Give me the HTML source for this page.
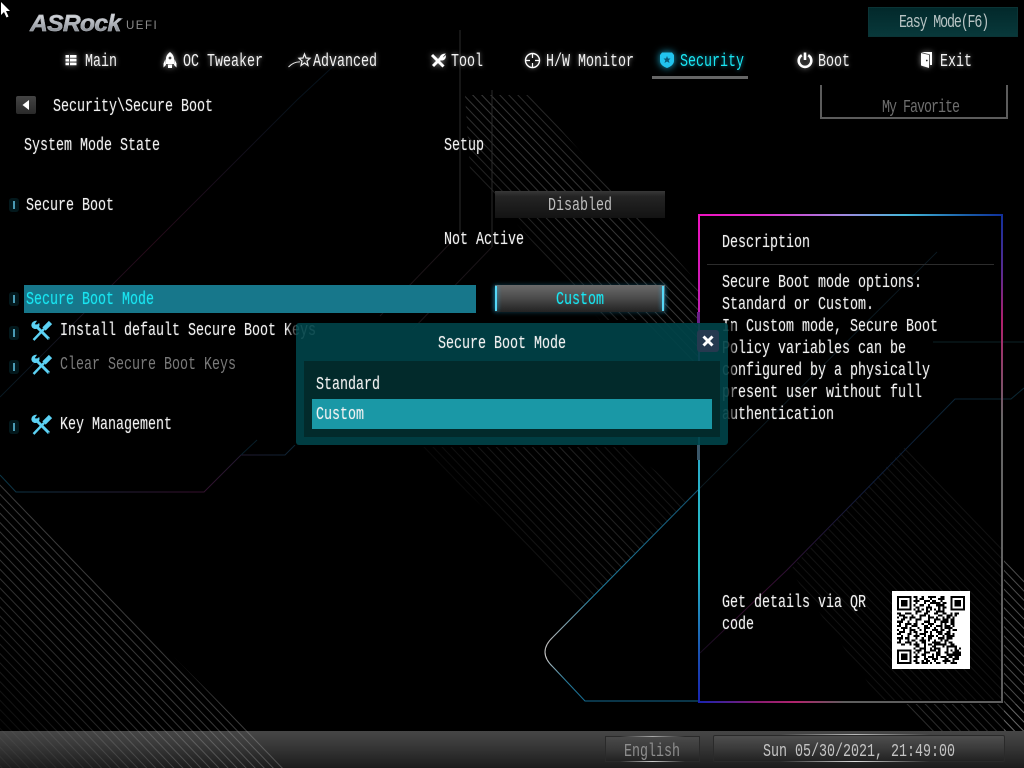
<!DOCTYPE html>
<html><head><meta charset="utf-8"><title>UEFI</title>
<style>
html,body{margin:0;padding:0;background:#000;width:1024px;height:768px;overflow:hidden}
#p{position:relative;width:1024px;height:768px;overflow:hidden;background:#000}
.a{position:absolute}
.t{position:absolute;white-space:pre;font:14px/20px "Liberation Mono",monospace;margin-top:2px;color:#f2f2f2;text-shadow:0 0 1px rgba(255,255,255,.3);transform:scale(.952,1.3);transform-origin:0 50%}
.n{text-shadow:0 0 4px rgba(255,255,255,.55)}
.c{color:#19e6f2;text-shadow:0 0 1px rgba(25,230,242,.4)}
svg{position:absolute;overflow:visible}
.ind{position:absolute;left:9px;width:10px;height:14px;background:#03181c;border-radius:3px}
.ind:after{content:"";position:absolute;left:4px;top:3px;width:2px;height:8px;background:#4a9ab4}
</style></head><body><div id="p">

<div class="a" style="left:0;top:731px;width:1024px;height:37px;background:linear-gradient(#464646,#3c3c3c 30%,#1c1c1c)"></div>

<svg style="left:0;top:0" width="1024" height="768" viewBox="0 0 1024 768" fill="none">
<defs>
<pattern id="h" patternUnits="userSpaceOnUse" width="6.5" height="40" patternTransform="rotate(-44)"><path d="M1 0V40" stroke="#b5b5b5" stroke-width=".7"/></pattern>
<linearGradient id="gd" gradientUnits="userSpaceOnUse" x1="40" y1="760" x2="160" y2="640"><stop offset="0" stop-color="#1a1a1a"/><stop offset=".6" stop-color="#666"/><stop offset="1" stop-color="#7a7a7a"/></linearGradient>
<linearGradient id="ga" gradientUnits="userSpaceOnUse" x1="520" y1="260" x2="620" y2="170"><stop offset="0" stop-color="#222"/><stop offset=".6" stop-color="#777"/><stop offset="1" stop-color="#3a3a3a"/></linearGradient>
<linearGradient id="gb" gradientUnits="userSpaceOnUse" x1="480" y1="560" x2="620" y2="470"><stop offset="0" stop-color="#0c0c0c"/><stop offset=".75" stop-color="#4a4a4a"/><stop offset="1" stop-color="#2a2a2a"/></linearGradient>
<mask id="md" maskUnits="userSpaceOnUse" x="0" y="0" width="1024" height="768"><rect width="1024" height="768" fill="url(#gd)"/></mask>
<mask id="ma" maskUnits="userSpaceOnUse" x="0" y="0" width="1024" height="768"><rect width="1024" height="768" fill="url(#ga)"/></mask>
<mask id="mb" maskUnits="userSpaceOnUse" x="0" y="0" width="1024" height="768"><rect width="1024" height="768" fill="url(#gb)"/></mask>
<linearGradient id="b1" gradientUnits="userSpaceOnUse" x1="0" y1="0" x2="300" y2="0"><stop offset="0" stop-color="#0a3646"/><stop offset=".65" stop-color="#36102e"/><stop offset="1" stop-color="#0a2634"/></linearGradient>
<linearGradient id="b2" gradientUnits="userSpaceOnUse" x1="0" y1="400" x2="300" y2="100"><stop offset="0" stop-color="#071a24"/><stop offset=".5" stop-color="#280b1a"/><stop offset="1" stop-color="#07121c"/></linearGradient>
<linearGradient id="l3" gradientUnits="userSpaceOnUse" x1="0" y1="490" x2="0" y2="701"><stop offset="0" stop-color="#12506e"/><stop offset=".5" stop-color="#1f7d9e"/><stop offset=".72" stop-color="#b8b8b8"/><stop offset=".8" stop-color="#c8c8c8"/><stop offset=".9" stop-color="#2a7d9c"/><stop offset="1" stop-color="#146a90"/></linearGradient>
<linearGradient id="l4" gradientUnits="userSpaceOnUse" x1="1011" y1="399" x2="700" y2="653"><stop offset="0" stop-color="#0b2834"/><stop offset=".4" stop-color="#0e1d3c"/><stop offset=".8" stop-color="#380c30"/><stop offset="1" stop-color="#180c20"/></linearGradient>
<linearGradient id="dt" gradientUnits="userSpaceOnUse" x1="698" y1="0" x2="1003" y2="0"><stop offset="0" stop-color="#f012c0"/><stop offset=".22" stop-color="#e030d0"/><stop offset=".48" stop-color="#a08ae0"/><stop offset=".68" stop-color="#44b8d8"/><stop offset=".88" stop-color="#1a5ea8"/><stop offset="1" stop-color="#10309c"/></linearGradient>
<linearGradient id="dl" gradientUnits="userSpaceOnUse" x1="0" y1="214" x2="0" y2="703"><stop offset="0" stop-color="#f012c0"/><stop offset=".2" stop-color="#c020b0"/><stop offset=".48" stop-color="#2aa8c8"/><stop offset=".72" stop-color="#25c0c8"/><stop offset=".9" stop-color="#1a50b0"/><stop offset="1" stop-color="#1822b0"/></linearGradient>
<linearGradient id="dr" gradientUnits="userSpaceOnUse" x1="0" y1="214" x2="0" y2="703"><stop offset="0" stop-color="#10309c"/><stop offset=".12" stop-color="#5a2a90"/><stop offset=".22" stop-color="#b0206c"/><stop offset=".42" stop-color="#666"/><stop offset="1" stop-color="#5e5e5e"/></linearGradient>
<linearGradient id="db" gradientUnits="userSpaceOnUse" x1="698" y1="0" x2="1003" y2="0"><stop offset="0" stop-color="#1822b0"/><stop offset=".2" stop-color="#8a1c70"/><stop offset=".32" stop-color="#b0246c"/><stop offset=".48" stop-color="#5e5e5e"/><stop offset="1" stop-color="#5e5e5e"/></linearGradient>
</defs>

<g mask="url(#md)"><polygon points="0,483 285,768 0,768" fill="url(#h)"/></g>
<g mask="url(#ma)"><polygon points="465,95 530,95 700,285 700,370 640,320 600,320 470,170" fill="url(#h)"/></g>
<g mask="url(#mb)"><polygon points="420,447 625,447 690,498 612,578 585,605" fill="url(#h)"/></g>
<polygon points="905,447 1001,540 1001,700 880,700 790,570" fill="url(#h)" opacity=".14"/>
<polygon points="1004,555 1024,575 1024,731 1004,731" fill="url(#h)" opacity=".6"/>
<polygon points="900,704 1024,704 1024,731 925,731" fill="url(#h)" opacity=".35"/>

<path d="M0 475L16 492H204L241 455H285L295 445" stroke="url(#b1)"/>
<path d="M241 455L257 440" stroke="#081f2a"/>
<path d="M0 397L297 100L340 60" stroke="url(#b2)" stroke-width=".9"/>
<path d="M460 30V233" stroke="#2c2c2c"/>
<path d="M460 233L380 316" stroke="#1c1418"/>
<path d="M492 90V247" stroke="#2a2a2a"/>
<path d="M492 247L412 330" stroke="#1a1418"/>
<path d="M937 252L698 490" stroke="#0c1a22" stroke-width=".9"/>
<path d="M698 490L553 637Q537 652 553 667L585 701H698" stroke="url(#l3)" stroke-width="1.1"/>
<path d="M1024 388L1011 399H955L787 570L700 653" stroke="url(#l4)"/>
<path d="M933 342H1024" stroke="#0b2226"/>

<path d="M699 215H1002" stroke="url(#dt)" stroke-width="2"/>
<path d="M699 214V703" stroke="url(#dl)" stroke-width="2"/>
<path d="M1002 214V703" stroke="url(#dr)" stroke-width="2"/>
<path d="M698 702H1003" stroke="url(#db)" stroke-width="2"/>
<path d="M707 264.500H994" stroke="#2c2c2c"/>
<path d="M698.500 312V323" stroke="#6a2088" stroke-width="3"/>
<path d="M698.500 445V460" stroke="#3a5668" stroke-width="3"/>
</svg>

<!-- cursor -->
<svg style="left:0;top:0" width="12" height="20" viewBox="0 0 12 20"><path d="M1 2V15L4 12L6.500 17.500L8.500 16.500L6 11H10Z" fill="#fff"/></svg>

<!-- logo -->
<div class="a" style="left:30px;top:9px;height:28px;white-space:pre;font:italic bold 23px/28px 'Liberation Sans',sans-serif;letter-spacing:-.6px;transform:scale(1.07,1);transform-origin:0 50%;background:linear-gradient(#f0f0f2,#b8bcc2 45%,#70757c);-webkit-background-clip:text;background-clip:text;-webkit-text-fill-color:transparent;-webkit-text-stroke:.5px #a8acb2">ASRock</div>
<div class="a" style="left:126px;top:19px;white-space:pre;font:11.500px/14px 'Liberation Sans',sans-serif;letter-spacing:1.500px;color:#8c8c8c">UEFI</div>

<!-- easy mode -->
<div class="a" style="left:868px;top:7px;width:148px;height:28px;border:1px solid #0b3436;background:linear-gradient(#02292b,#08383a)"></div>
<div class="t" style="left:899px;top:11px;color:#b8c4c4;letter-spacing:-1.200px;text-shadow:none">Easy Mode(F6)</div>

<!-- nav icons -->
<svg style="left:64px;top:53px;filter:drop-shadow(0 0 3px rgba(255,255,255,.6))" width="14" height="14" viewBox="0 0 14 14" fill="#fff"><path d="M1.500 2h3.500v2.700H1.500zM6 2h6.500v2.700H6zM1.500 5.800h3.500v2.700H1.500zM6 5.800h6.500v2.700H6zM1.500 9.600h3.500v2.700H1.500zM6 9.600h6.500v2.700H6z"/></svg>
<svg style="left:162px;top:51px;filter:drop-shadow(0 0 3px rgba(255,255,255,.6))" width="16" height="18" viewBox="0 0 16 18" fill="#fff"><path d="M8 1C10.500 3 12 5 12 8V13H4V8C4 5 5.500 3 8 1ZM3.500 8L1.500 12.500V16.500L4 14ZM12.500 8L14.500 12.500V16.500L12 14ZM6 13.500H10V17H6Z"/><circle cx="8" cy="7" r="1.400" fill="#444"/></svg>
<svg style="left:288px;top:52px;filter:drop-shadow(0 0 2px rgba(255,255,255,.45))" width="24" height="18" viewBox="0 0 24 18" fill="none" stroke="#eee" stroke-width="1.200"><path d="M16.500 2L18 6L22 6.300L19 9L20 13.500L16.500 11L13 13.500L14 9L11 6.300L15 6Z"/><path d="M0.500 15C4 11.500 7 10 12 9.800" stroke-width=".9"/></svg>
<svg style="left:430px;top:53px;filter:drop-shadow(0 0 3px rgba(255,255,255,.55))" width="16" height="16" viewBox="0 0 16 16" fill="none" stroke="#fff"><path d="M2 2L13.500 13.500" stroke-width="3"/><path d="M3 13L11 5" stroke-width="3"/><path d="M10 6.500C9.500 3.500 11.500 1 15 1L12.500 4L13 5L15.500 3C15.500 6.500 12.500 8 10 6.500Z" fill="#fff" stroke-width=".8"/></svg>
<svg style="left:524px;top:52px;filter:drop-shadow(0 0 2px rgba(255,255,255,.5))" width="17" height="17" viewBox="0 0 17 17" fill="none" stroke="#fff" stroke-width="1.400"><circle cx="8.500" cy="8.500" r="7"/><path d="M8.500 1V6M8.500 11V16M1 8.500H6M11 8.500H16" stroke-width="1.200"/></svg>
<svg style="left:659px;top:51px;filter:drop-shadow(0 0 4px rgba(30,200,240,.9))" width="16" height="18" viewBox="0 0 16 18" fill="#22c4ee"><path d="M3 1.500H13L15 4V10C15 13.500 11 16 8 17C5 16 1 13.500 1 10V4Z"/><path d="M8 5L9 7.500L11.500 7.500L9.700 9.300L10.500 12L8 10.500L5.500 12L6.300 9.300L4.500 7.500L7 7.500Z" fill="#0a5a78"/></svg>
<svg style="left:797px;top:52px;filter:drop-shadow(0 0 3px rgba(255,255,255,.55))" width="16" height="16" viewBox="0 0 16 16" fill="none" stroke="#fff" stroke-width="2.600"><path d="M4.800 3.200A6.300 6.300 0 1 0 11.200 3.200"/><path d="M8 .5V8"/></svg>
<svg style="left:920px;top:51px;filter:drop-shadow(0 0 3px rgba(255,255,255,.55))" width="14" height="18" viewBox="0 0 14 18" fill="#fff"><path d="M1 1H12V14H10V3.500L1 1ZM1 2L9 4V17L1 14.500Z"/><circle cx="6.800" cy="9.500" r=".9" fill="#222"/></svg>

<div class="t n" style="left:85px;top:50px">Main</div>
<div class="t n" style="left:183px;top:50px">OC Tweaker</div>
<div class="t n" style="left:313px;top:50px">Advanced</div>
<div class="t n" style="left:451px;top:50px">Tool</div>
<div class="t n" style="left:546px;top:50px">H/W Monitor</div>
<div class="t c" style="left:680px;top:50px;text-shadow:0 0 4px rgba(25,200,240,.7)">Security</div>
<div class="t n" style="left:818px;top:50px">Boot</div>
<div class="t n" style="left:940px;top:50px">Exit</div>
<div class="a" style="left:652px;top:76px;width:96px;height:3px;background:#666"></div>

<!-- back -->
<div class="a" style="left:16px;top:96px;width:20px;height:18px;background:linear-gradient(#444,#2a2a2a);border-radius:2px"></div>
<svg style="left:21px;top:99px" width="10" height="12" viewBox="0 0 10 12"><path d="M1.500 6L8 1V11Z" fill="#fff"/></svg>
<div class="t" style="left:53px;top:95px">Security\Secure Boot</div>

<!-- My Favorite -->
<div class="a" style="left:820px;top:85px;width:184px;height:32px;border:2px solid #5c5c5c;border-top:0"></div>
<div class="t" style="left:882px;top:96px;color:#6e6e6e;letter-spacing:-1.050px;text-shadow:none">My Favorite</div>

<!-- rows -->
<div class="t" style="left:24px;top:134px">System Mode State</div>
<div class="t" style="left:444px;top:134px">Setup</div>
<div class="ind" style="top:198px"></div>
<div class="t" style="left:26px;top:194px">Secure Boot</div>
<div class="a" style="left:495px;top:191px;width:170px;height:27px;background:linear-gradient(#383838,#242424 20%,#131313)"></div>
<div class="t" style="left:548px;top:194px;color:#bdbdbd;text-shadow:none">Disabled</div>
<div class="t" style="left:444px;top:228px">Not Active</div>

<div class="ind" style="top:292px"></div>
<div class="a" style="left:24px;top:285px;width:452px;height:28px;background:#17778b"></div>
<div class="t c" style="left:26px;top:288px">Secure Boot Mode</div>
<div class="a" style="left:495px;top:285px;width:170px;height:27px;background:linear-gradient(#6a6a6a,#4a4a4a 50%,#222);box-shadow:0 0 5px rgba(30,120,150,.5)"></div>
<div class="a" style="left:495px;top:286px;width:2px;height:25px;background:#55d8f8;box-shadow:0 0 5px #2aa8d8"></div>
<div class="a" style="left:662px;top:286px;width:2px;height:25px;background:#55d8f8;box-shadow:0 0 5px #2aa8d8"></div>
<div class="t c" style="left:556px;top:288px">Custom</div>

<div class="ind" style="top:326px"></div>
<div class="t" style="left:60px;top:319px">Install default Secure Boot Keys</div>
<div class="ind" style="top:360px"></div>
<div class="t" style="left:60px;top:353px;color:#7a7a7a;text-shadow:none">Clear Secure Boot Keys</div>
<div class="ind" style="top:420px"></div>
<div class="t" style="left:60px;top:413px">Key Management</div>

<svg style="left:30px;top:320px" width="23" height="23" viewBox="0 0 23 23" fill="none" stroke="#5cd2f4"><path d="M5 5L19 19" stroke-width="3"/><path d="M2.500 7.500C0.500 4.500 2.500 1 6.500 1L4.500 4L6 5.800L9 3.500C10 7 7 9.500 4 8.500Z" fill="#5cd2f4" stroke-width=".6"/><path d="M20.500 2.500L14 9" stroke-width="4.600"/><path d="M14 9L3.500 20" stroke-width="2.400"/><path d="M18.500 18.500L19.500 19.500" stroke="#06303c" stroke-width="1.200"/></svg>
<svg style="left:30px;top:354px" width="23" height="23" viewBox="0 0 23 23" fill="none" stroke="#5cd2f4"><path d="M5 5L19 19" stroke-width="3"/><path d="M2.500 7.500C0.500 4.500 2.500 1 6.500 1L4.500 4L6 5.800L9 3.500C10 7 7 9.500 4 8.500Z" fill="#5cd2f4" stroke-width=".6"/><path d="M20.500 2.500L14 9" stroke-width="4.600"/><path d="M14 9L3.500 20" stroke-width="2.400"/><path d="M18.500 18.500L19.500 19.500" stroke="#06303c" stroke-width="1.200"/></svg>
<svg style="left:30px;top:414px" width="23" height="23" viewBox="0 0 23 23" fill="none" stroke="#5cd2f4"><path d="M5 5L19 19" stroke-width="3"/><path d="M2.500 7.500C0.500 4.500 2.500 1 6.500 1L4.500 4L6 5.800L9 3.500C10 7 7 9.500 4 8.500Z" fill="#5cd2f4" stroke-width=".6"/><path d="M20.500 2.500L14 9" stroke-width="4.600"/><path d="M14 9L3.500 20" stroke-width="2.400"/><path d="M18.500 18.500L19.500 19.500" stroke="#06303c" stroke-width="1.200"/></svg>

<!-- description -->
<div class="t" style="left:722px;top:231px">Description</div>
<div class="t" style="left:722px;top:271px">Secure Boot mode options:</div>
<div class="t" style="left:722px;top:293px">Standard or Custom.</div>
<div class="t" style="left:722px;top:315px">In Custom mode, Secure Boot</div>
<div class="t" style="left:722px;top:337px">Policy variables can be</div>
<div class="t" style="left:722px;top:359px">configured by a physically</div>
<div class="t" style="left:722px;top:381px">present user without full</div>
<div class="t" style="left:722px;top:403px">authentication</div>
<div class="t" style="left:722px;top:591px">Get details via QR</div>
<div class="t" style="left:722px;top:613px">code</div>

<!-- QR -->
<div class="a" style="left:892px;top:591px;width:78px;height:78px;background:#fff"></div>
<svg style="left:897px;top:596px" width="68" height="68" viewBox="0 0 33 33" shape-rendering="crispEdges">
<g fill="none" stroke="#000"><rect x=".5" y=".5" width="6" height="6"/><rect x="26.500" y=".5" width="6" height="6"/><rect x=".5" y="26.500" width="6" height="6"/><rect x="24.500" y="24.500" width="4" height="4"/>
<path d="M8 .5h2m2 0h1m2 0h4m2 0h2M9 1.500h1m1 0h2m3 0h1m3 0h3M8 2.500h3m2 0h3m1 0h2m2 0h1M9 3.500h1m3 0h1m2 0h5m1 0h2M8 4.500h1m2 0h2m2 0h1m3 0h4M9 5.500h2m3 0h3m3 0h1m1 0h2M8 6.500h1m1 0h1m1 0h1m1 0h1m1 0h1m1 0h1m1 0h1m1 0h1M9 7.500h3m2 0h2m3 0h4M0 8.500h2m2 0h3m2 0h1m3 0h2m3 0h2m2 0h2m2 0h1m1 0h2M1 9.500h3m3 0h1m3 0h3m1 0h1m4 0h2m2 0h3m1 0h1M0 10.500h1m2 0h2m1 0h3m2 0h1m3 0h3m1 0h1m2 0h1m1 0h2m1 0h1M2 11.500h2m2 0h1m2 0h3m3 0h1m2 0h3m1 0h3m1 0h2M0 12.500h3m2 0h1m3 0h1m3 0h3m2 0h1m2 0h4m1 0h2M1 13.500h1m2 0h3m1 0h2m2 0h1m2 0h3m3 0h1m1 0h1m2 0h2M0 14.500h2m2 0h1m2 0h3m3 0h2m1 0h1m2 0h3m1 0h3m1 0h1M2 15.500h3m1 0h1m3 0h1m2 0h3m2 0h1m2 0h1m1 0h4M0 16.500h1m2 0h1m2 0h3m2 0h1m1 0h1m3 0h3m1 0h2m2 0h1m1 0h2M1 17.500h3m2 0h1m1 0h2m3 0h2m1 0h1m2 0h3m2 0h2M0 18.500h2m3 0h2m2 0h1m1 0h3m2 0h1m3 0h2m1 0h3m1 0h1M2 19.500h1m2 0h1m2 0h3m2 0h1m1 0h3m1 0h1m2 0h1m1 0h4M0 20.500h3m1 0h2m3 0h1m2 0h1m2 0h2m3 0h3m1 0h3M1 21.500h1m3 0h1m1 0h2m2 0h3m1 0h1m2 0h1m2 0h1m1 0h2M0 22.500h2m2 0h3m2 0h1m2 0h2m3 0h4m2 0h1m1 0h2M2 23.500h2m2 0h1m1 0h3m2 0h1m1 0h2m1 0h6m2 0h2M9 24.500h2m2 0h1m3 0h2m3 0h1M8 25.500h1m2 0h3m2 0h1m1 0h3m3 0h1m3 0h1m1 0h1M9 26.500h3m1 0h1m2 0h3m1 0h1m3 0h1m3 0h2M8 27.500h1m1 0h1m2 0h3m3 0h2m2 0h1m3 0h1m1 0h2M9 28.500h1m2 0h2m3 0h1m1 0h2m3 0h1m3 0h3M8 29.500h3m2 0h1m1 0h3m1 0h1m1 0h3m1 0h2m1 0h2M9 30.500h1m3 0h2m2 0h3m3 0h2m2 0h3M8 31.500h2m2 0h1m1 0h2m2 0h1m3 0h4m1 0h1M9 32.500h2m1 0h3m1 0h1m2 0h2m2 0h1m2 0h3"/></g>
<g fill="#000"><rect x="2" y="2" width="3" height="3"/><rect x="28" y="2" width="3" height="3"/><rect x="2" y="28" width="3" height="3"/><rect x="26" y="26" width="1" height="1"/></g>
</svg>

<!-- modal -->
<div class="a" style="left:286px;top:323px;width:10px;height:122px;background:linear-gradient(90deg,transparent,rgba(0,0,0,.8))"></div>
<div class="a" style="left:728px;top:323px;width:10px;height:122px;background:linear-gradient(90deg,rgba(0,0,0,.85),transparent)"></div>
<div class="a" style="left:296px;top:323px;width:432px;height:122px;background:rgba(0,66,72,.92);border-radius:3px"></div>
<div class="a" style="left:304px;top:361px;width:416px;height:76px;background:#022a2b"></div>
<div class="a" style="left:312px;top:399px;width:400px;height:30px;background:#1a98a6"></div>
<div class="t" style="left:438px;top:332px">Secure Boot Mode</div>
<div class="t" style="left:316px;top:373px">Standard</div>
<div class="t" style="left:316px;top:403px">Custom</div>
<div class="a" style="left:697px;top:330px;width:22px;height:22px;background:#25394f;border-radius:3px"></div>
<svg style="left:701px;top:334px" width="14" height="14" viewBox="0 0 14 14"><path d="M2.500 2.500L11.500 11.500M11.500 2.500L2.500 11.500" stroke="#fff" stroke-width="3"/></svg>

<!-- footer buttons -->
<div class="a" style="left:605px;top:736px;width:95px;height:26px;background:linear-gradient(#4a4a4a,#3a3a3a 50%,#222);border:1px solid #2a2a2a;box-sizing:border-box"></div>
<div class="a" style="left:620px;top:736px;width:65px;height:1px;background:linear-gradient(90deg,transparent,#aaa,transparent)"></div>
<div class="a" style="left:620px;top:761px;width:65px;height:1px;background:linear-gradient(90deg,transparent,#ccc,transparent)"></div>
<div class="t" style="left:624px;top:740px;color:#8e8e8e;text-shadow:none">English</div>
<div class="a" style="left:713px;top:735px;width:292px;height:27px;background:linear-gradient(#4e4e4e,#3a3a3a 50%,#222);border:1px solid #2a2a2a;box-sizing:border-box;border-radius:2px"></div>
<div class="a" style="left:780px;top:734px;width:150px;height:1px;background:linear-gradient(90deg,transparent,#bbb,transparent)"></div>
<div class="a" style="left:780px;top:761px;width:150px;height:1px;background:linear-gradient(90deg,transparent,#ddd,transparent)"></div>
<div class="t" style="left:763px;top:740px;color:#c4c4c4;text-shadow:none">Sun 05/30/2021, 21:49:00</div>

</div></body></html>
